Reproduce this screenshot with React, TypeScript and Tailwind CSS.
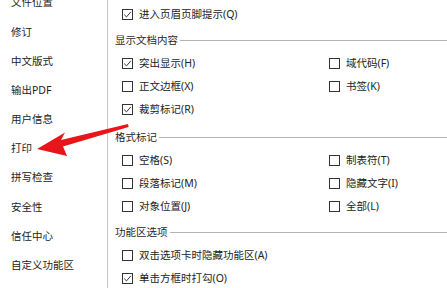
import { ReactNode } from "react";

const FONT = { fontFamily: '"Noto Sans", "Noto Sans CJK SC", sans-serif' };

const NAV = [
  "文件位置",
  "修订",
  "中文版式",
  "输出PDF",
  "用户信息",
  "打印",
  "拼写检查",
  "安全性",
  "信任中心",
  "自定义功能区",
];

function Box({ checked }: { checked?: boolean }) {
  return (
    <span className="flex h-[11px] w-[11px] shrink-0 items-center justify-center border border-[#333333] bg-white">
      {checked && (
        <svg width="9" height="9" viewBox="0 0 9 9" fill="none">
          <path d="M1.2 4.6 L3.5 6.9 L7.9 1.8" stroke="#333333" strokeWidth="1" />
        </svg>
      )}
    </span>
  );
}

function Option({ label, checked }: { label?: string; checked?: boolean }) {
  if (!label) return <div className="h-[23px]" />;
  return (
    <div className="flex h-[23px] items-center gap-[6px]">
      <Box checked={checked} />
      <span className="whitespace-nowrap leading-none">{label}</span>
    </div>
  );
}

function Row({ left, right }: { left: ReactNode; right?: ReactNode }) {
  return (
    <div className="grid grid-cols-[207px_1fr] pl-[14px]">
      {left}
      {right ?? <div />}
    </div>
  );
}

function Section({ title }: { title: string }) {
  return (
    <div className="flex h-[26px] items-center gap-[2px] pl-[7px] pt-[5px] pb-[2px]">
      <span className="whitespace-nowrap leading-none text-[#1f1f1f]">{title}</span>
      <div className="h-px flex-1 bg-[#b4b4b4]" />
    </div>
  );
}

export default function App() {
  return (
    <div
      className="relative flex h-[288px] w-[447px] overflow-hidden bg-white text-[10.5px] text-[#222222]"
      style={FONT}
    >
      {/* Sidebar */}
      <nav className="flex w-[108px] shrink-0 flex-col border-r border-[#c6c6c6]">
        <div className="-mt-[12px] flex flex-col">
          {NAV.map((n) => (
            <div key={n} className="flex h-[29.2px] items-center pl-[11px] leading-none">
              {n}
            </div>
          ))}
        </div>
      </nav>

      {/* Options panel */}
      <main className="flex-1">
        <div className="-mt-[20px] flex flex-col">
          <Row left={<Option label="状态栏(U)" checked />} right={<Option label="启用实时预览(V)" />} />
          <Row left={<Option label="进入页眉页脚提示(Q)" checked />} />

          <Section title="显示文档内容" />
          <Row left={<Option label="突出显示(H)" checked />} right={<Option label="域代码(F)" />} />
          <Row left={<Option label="正文边框(X)" />} right={<Option label="书签(K)" />} />
          <Row left={<Option label="裁剪标记(R)" checked />} />

          <div className="h-[2px]" />
          <Section title="格式标记" />
          <Row left={<Option label="空格(S)" />} right={<Option label="制表符(T)" />} />
          <Row left={<Option label="段落标记(M)" />} right={<Option label="隐藏文字(I)" />} />
          <Row left={<Option label="对象位置(J)" />} right={<Option label="全部(L)" />} />

          <Section title="功能区选项" />
          <Row left={<Option label="双击选项卡时隐藏功能区(A)" />} />
          <Row left={<Option label="单击方框时打勾(O)" checked />} />
        </div>
      </main>

      {/* Red annotation arrow */}
      <svg
        className="pointer-events-none absolute left-0 top-0"
        width="447"
        height="288"
        viewBox="0 0 447 288"
      >
        <polygon
          points="37,149 65,132.5 61,140 128,124 128.6,127 63,146.5 67,156"
          fill="#e8161b"
        />
      </svg>
    </div>
  );
}
